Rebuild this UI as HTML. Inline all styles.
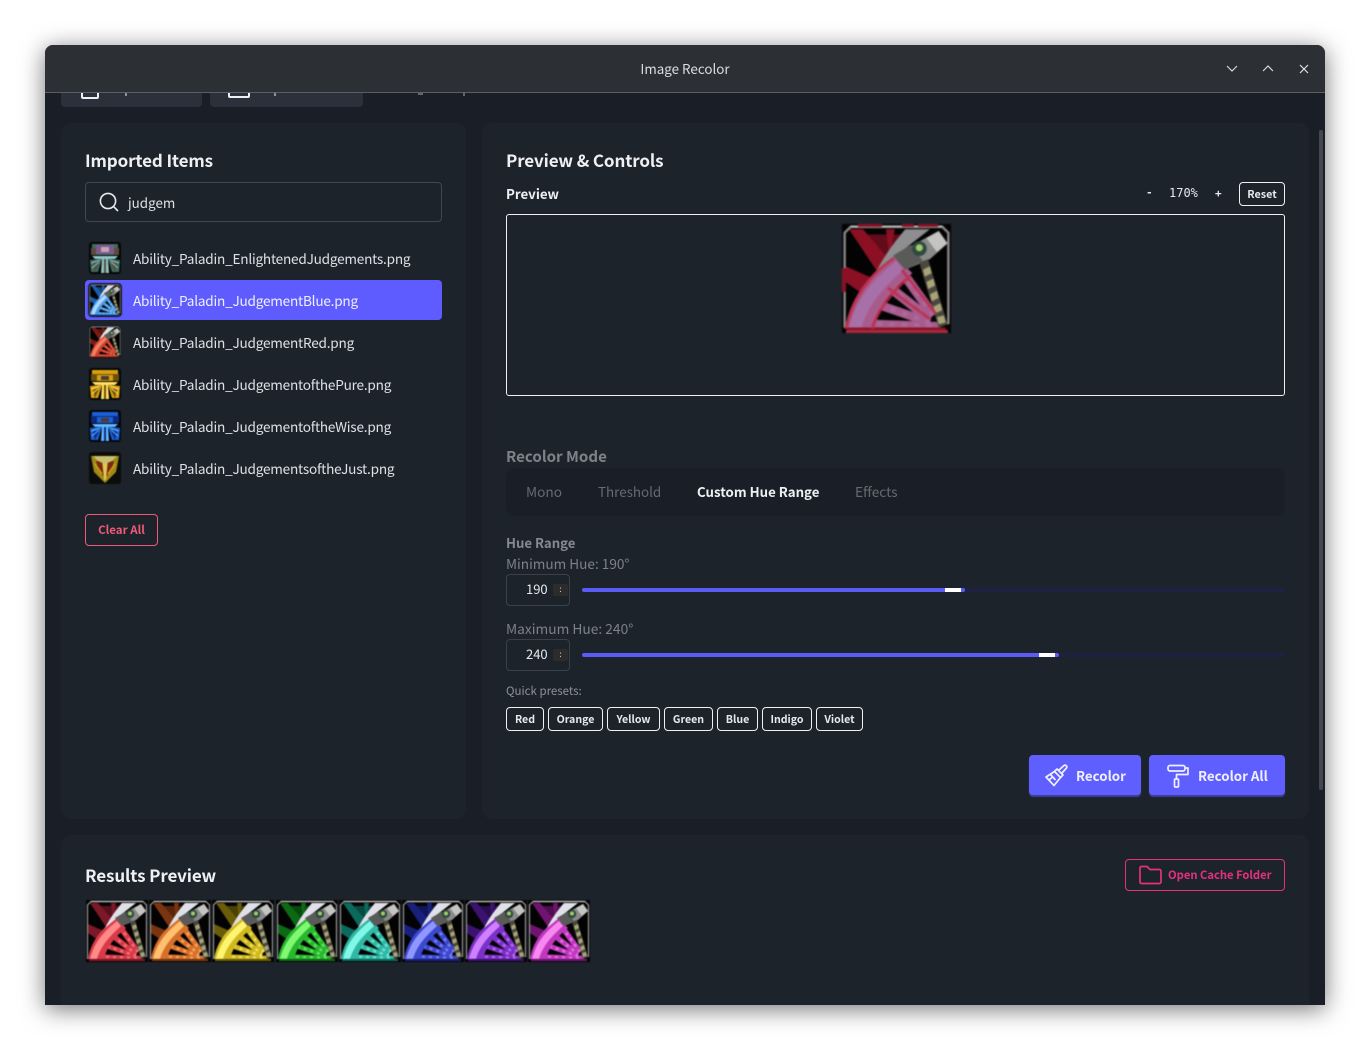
<!DOCTYPE html>
<html><head><meta charset="utf-8"><style>
html,body{margin:0;padding:0;width:1370px;height:1050px;background:#fff;overflow:hidden}
body{font-family:"Noto Sans CJK JP","Liberation Sans",sans-serif;color:#e6e9ee;position:relative}
.a{position:absolute;white-space:nowrap}
#win{position:absolute;left:45px;top:45px;width:1280px;height:960px;background:#1a1e26;border-radius:8px 8px 0 0;box-shadow:0 4px 24px rgba(0,0,0,.55);overflow:hidden}
#tb{position:absolute;left:0;top:0;width:1280px;height:47px;background:#2c2f33;border-bottom:1px solid #5c5e61;z-index:5}
.card{position:absolute;background:#1d232b;border-radius:10px}
.h{font-size:17px;font-weight:700;color:#eef0f3;line-height:24px;letter-spacing:-.12px}
.row{font-size:13.6px;color:#dde1e7;line-height:20px;letter-spacing:-.22px}
.p{position:absolute;top:707px;height:22px;border:1px solid #eef0f3;border-radius:4px;font-size:10.6px;font-weight:700;color:#e6e9ee;text-align:center;line-height:23px;box-sizing:content-box}
.dim{color:#7d8289}
.num{position:absolute;left:506px;width:62px;height:30px;border:1px solid #3b4149;border-radius:4px}
.spin{position:absolute;left:553px;width:15px;height:12px;background:#2c2c2c;border-radius:2px;color:#ddd;font-size:8px;line-height:11px;text-align:center}
.trk{position:absolute;left:582px;width:703px;height:4px;background:#1f2140;border-radius:2px}
.btn{position:absolute;top:755px;height:40px;background:#5f5fff;border-radius:4px;box-shadow:0 2px 1px #3f3f9e;font-size:13.3px;font-weight:700;color:#eef0ff;line-height:41px}
svg{display:block}
.ic{position:absolute}
.sm{filter:blur(.4px)}
</style></head><body>
<svg width="0" height="0" style="position:absolute"><defs>
<symbol id="ham" viewBox="0 0 62 62">
<rect x="0" y="0" width="62" height="62" fill="#030303"/>
<g fill="var(--d)">
<path d="M4 3L12 3L30 24L22 30Z"/><path d="M2 24L20 32L15 42L2 33Z"/>
<path d="M12 6H36L28 22L22 26L18 16Z" opacity=".7"/><path d="M25 3L27 20L30 3Z"/>
</g>
<g fill="none" stroke="var(--m)">
<path d="M34 27L52 52" stroke-width="5.500"/><path d="M27 36L50 54" stroke-width="5.500"/><path d="M21 46L50 56" stroke-width="5"/><path d="M13 56.500L56 58" stroke-width="4.500"/>
</g>
<g fill="none" stroke="var(--l)" stroke-dasharray="3 4" opacity=".7">
<path d="M34 27L52 52" stroke-width="2.500"/><path d="M27 36L50 54" stroke-width="2.500"/><path d="M21 46L50 56" stroke-width="2.500"/><path d="M13 56.500L56 58" stroke-width="2"/>
</g>
<path d="M2 59C5 42 14 30 30 18L40 28C30 36 21 46 18 59Z" fill="var(--m)"/>
<path d="M4 59C8 43 17 32 31 21L35 26C25 35 15 45 11 59Z" fill="var(--l)"/>
<path d="M36 3H50L32 17L19 28C24 18 30 10 36 3Z" fill="var(--w,#e0e0e8)"/>
<path d="M29 18L55 4L60 11L50 20L36 26Z" fill="#8a8a88"/>
<path d="M29 18L39 12L46 21L36 26Z" fill="#5a5a58"/>
<path d="M48 8L55 4L60 11L54 16Z" fill="#c4c4c2"/>
<circle cx="44" cy="14" r="4.200" fill="#2c4a40"/><circle cx="44" cy="13.500" r="2" fill="#a8c868"/>
<path d="M44 22L49 20L60 57L55 59Z" fill="#4a483e"/>
<g fill="#a8a478"><path d="M46 26L50 24L51 28L47 30ZM48 33L52 31L53 35L49 37ZM50 40L54 38L55 42L51 44ZM52 47L56 45L57 49L53 51ZM54 53L58 52L59 56L55 57Z"/></g>
<path d="M1.500 59V5L5 1.500H57L60.500 5V57" fill="none" stroke="#8e8e8e" stroke-width="1.300"/>
<path d="M5 1.500H57" stroke="#bdbdbd" stroke-width="1.300"/>
<path d="M3 60H59" stroke="var(--d)" stroke-width="2.200"/>
</symbol>
<symbol id="temple" viewBox="0 0 32 32">
<rect width="32" height="32" rx="2" fill="#07070a"/>
<path d="M3 2H29V6H3Z" fill="var(--m)"/>
<path d="M2 6H30V13H2Z" fill="var(--d)"/>
<path d="M8 7H24V13H8Z" fill="var(--m)"/><path d="M12 8H20V12H12Z" fill="#4a3c34"/>
<path d="M3 14H29L26 17H6Z" fill="var(--l)"/>
<path d="M1 18L13 17L9 30H2Z" fill="var(--m)"/><path d="M31 18L19 17L23 30H30Z" fill="var(--m)"/>
<path d="M13 17H19L20 31H12Z" fill="var(--l)"/><path d="M15 17H17V31H15Z" fill="var(--d)"/>
<path d="M4 22L11 19L6 30ZM28 22L21 19L26 30Z" fill="var(--d)"/>
<path d="M2 21L11 18M30 21L21 18M3 26L10 20M29 26L22 20" stroke="var(--l)" stroke-width="1" fill="none"/>
</symbol>
</defs></svg>

<div id="win">
<div id="tb">
<div class="a" style="left:0;width:1280px;top:13px;text-align:center;font-size:13.400px;line-height:20px;color:#dcdde0">Image Recolor</div>
<svg class="ic" style="left:1181px;top:19px" width="12" height="10"><path d="M1 2L6 7L11 2" fill="none" stroke="#d8d8da" stroke-width="1.200"/></svg>
<svg class="ic" style="left:1217px;top:19px" width="12" height="10"><path d="M1 7L6 2L11 7" fill="none" stroke="#d8d8da" stroke-width="1.200"/></svg>
<svg class="ic" style="left:1254px;top:19px" width="10" height="10"><path d="M1 1L9 9M9 1L1 9" fill="none" stroke="#e2e2e4" stroke-width="1.200"/></svg>
</div>
</div>

<!-- top hidden buttons -->
<div class="a" style="left:61px;top:70px;width:141px;height:37px;background:#2a313a;border-radius:4px"></div>
<div class="a" style="left:210px;top:70px;width:153px;height:37px;background:#2a313a;border-radius:4px"></div>
<div class="a" style="left:81px;top:87px;width:14px;height:8px;border:2px solid #eef0f3;border-radius:2px"></div>
<div class="a" style="left:228px;top:87px;width:18px;height:7px;border:2px solid #eef0f3;border-radius:2px"></div>
<div class="a" style="left:125px;top:93px;width:2px;height:3px;background:#8d939b"></div>
<div class="a" style="left:274px;top:93px;width:2px;height:3px;background:#8d939b"></div>
<div class="a" style="left:418px;top:93px;width:5px;height:2px;background:#666"></div>
<div class="a" style="left:463px;top:93px;width:2px;height:3px;background:#666"></div>

<!-- cards -->
<div class="card" style="left:61px;top:123px;width:405px;height:696px"></div>
<div class="card" style="left:482px;top:123px;width:827px;height:696px"></div>
<div class="card" style="left:61px;top:835px;width:1248px;height:170px;border-radius:10px 10px 0 0"></div>
<div class="a" style="left:1319px;top:130px;width:4px;height:660px;background:#44484e;border-radius:2px"></div>

<!-- left -->
<div class="a h" style="left:85px;top:148px">Imported Items</div>
<div class="a" style="left:85px;top:182px;width:355px;height:38px;border:1px solid #41474f;border-radius:4px"></div>
<svg class="ic" style="left:98px;top:191px" width="22" height="22"><circle cx="10" cy="10" r="7.600" fill="none" stroke="#e6e9ee" stroke-width="1.600"/><path d="M15.600 15.600L20 20" stroke="#e6e9ee" stroke-width="1.600"/></svg>
<div class="a" style="left:128px;top:192px;font-size:13.400px;line-height:20px;color:#dde1e7">judgem</div>

<div class="a" style="left:85px;top:280px;width:357px;height:40px;background:#5f5cff;border-radius:4px"></div>

<!-- list icons -->
<svg class="ic sm" style="left:89px;top:242px;border-radius:3px;--l:#8fc4c4;--m:#3f6a5e;--d:#5a4c3c" width="32" height="32"><use href="#temple"/><rect x="7" y="3" width="18" height="9" fill="#7a5c8c"/><rect x="12" y="5" width="8" height="5" fill="#c9a0b8"/></svg>
<svg class="ic sm" style="left:89px;top:284px;border-radius:3px;outline:1px solid #1a1a22;--l:#b0d8ff;--m:#4a9be8;--d:#1c5fb0" width="32" height="32"><use href="#ham"/></svg>
<svg class="ic sm" style="left:89px;top:326px;border-radius:3px;--l:#f08060;--m:#d04030;--d:#7a1c14" width="32" height="32"><use href="#ham"/></svg>
<svg class="ic sm" style="left:89px;top:368px;border-radius:3px;--l:#ffe060;--m:#d8a010;--d:#6e5008" width="32" height="32"><use href="#temple"/></svg>
<svg class="ic sm" style="left:89px;top:410px;border-radius:3px;--l:#60b8ff;--m:#1c5fd8;--d:#0c2a80" width="32" height="32"><use href="#temple"/></svg>
<svg class="ic sm" style="left:89px;top:452px;border-radius:3px" width="32" height="32" viewBox="0 0 32 32"><rect width="32" height="32" rx="2" fill="#0c0c0a"/><path d="M2 4H30L27 20L16 31L5 20Z" fill="#a08a18"/><path d="M7 9H25L23 18L16 26L9 18Z" fill="#7a2a10"/><path d="M13 7H19L17 28H15Z" fill="#e0c850"/><path d="M4 4H28L23 9L16 12L9 9Z" fill="#c8c070"/><path d="M6 12L13 22M26 12L19 22" stroke="#d8a820" stroke-width="1.500"/></svg>

<div class="a row" style="left:133px;top:248px">Ability_Paladin_EnlightenedJudgements.png</div>
<div class="a row" style="left:133px;top:290px;color:#eef0ff">Ability_Paladin_JudgementBlue.png</div>
<div class="a row" style="left:133px;top:332px">Ability_Paladin_JudgementRed.png</div>
<div class="a row" style="left:133px;top:374px">Ability_Paladin_JudgementofthePure.png</div>
<div class="a row" style="left:133px;top:416px">Ability_Paladin_JudgementoftheWise.png</div>
<div class="a row" style="left:133px;top:458px">Ability_Paladin_JudgementsoftheJust.png</div>

<div class="a" style="left:85px;top:514px;width:71px;height:30px;border:1px solid #ee5a77;border-radius:4px;text-align:center;font-size:11.500px;font-weight:700;color:#ee5a77;line-height:30px">Clear All</div>

<!-- right -->
<div class="a h" style="left:506px;top:148px">Preview &amp; Controls</div>
<div class="a" style="left:506px;top:184px;font-size:13.300px;font-weight:700;line-height:20px;color:#eef0f3">Preview</div>
<div class="a" style="left:1146px;top:183px;font-family:'DejaVu Sans Mono',monospace;font-size:11px;font-weight:700;line-height:20px;color:#e6e9ee">-</div>
<div class="a" style="left:1169px;top:183px;font-family:'DejaVu Sans Mono',monospace;font-size:12px;line-height:20px;color:#e6e9ee">170%</div>
<div class="a" style="left:1215px;top:184px;font-family:'DejaVu Sans Mono',monospace;font-size:11px;font-weight:700;line-height:20px;color:#e6e9ee">+</div>
<div class="a" style="left:1239px;top:182px;width:44px;height:22px;border:1px solid #eef0f3;border-radius:4px;text-align:center;font-size:10.800px;font-weight:700;line-height:22px;color:#e6e9ee">Reset</div>
<div class="a" style="left:506px;top:214px;width:777px;height:180px;border:1px solid #eef0f3;border-radius:3px"></div>
<svg class="ic" style="left:842px;top:224px;filter:blur(.7px);--l:#a870a8;--m:#a85c8c;--d:#8c1024;--w:#8e8e90" width="109" height="109"><use href="#ham"/>
<g fill="none" stroke="#c02a48" stroke-width="3" opacity=".8"><path d="M4 105C10 75 28 50 52 34"/><path d="M30 105C36 85 50 68 68 52"/><path d="M60 46L94 90M46 64L88 95"/></g>
<g fill="#8c1024"><rect x="16" y="0" width="24" height="3"/><rect x="60" y="0" width="12" height="3"/><rect x="76" y="0" width="20" height="3"/><rect x="0" y="44" width="4" height="24"/></g>
<path d="M4 106H106V109H4Z" fill="#a82a3c"/></svg>

<div class="a dim" style="left:506px;top:445px;font-size:15.100px;font-weight:700;line-height:22px">Recolor Mode</div>
<div class="a" style="left:506px;top:468px;width:779px;height:48px;background:#1a1f27;border-radius:8px"></div>
<div class="a" style="left:526px;top:481px;font-size:13.700px;line-height:20px;color:#666b72">Mono</div>
<div class="a" style="left:598px;top:481px;font-size:13.400px;line-height:20px;color:#666b72">Threshold</div>
<div class="a" style="left:697px;top:482px;font-size:13.250px;font-weight:700;line-height:20px;color:#eef0f3">Custom Hue Range</div>
<div class="a" style="left:855px;top:481px;font-size:13.700px;line-height:20px;color:#666b72">Effects</div>

<div class="a dim" style="left:506px;top:533px;font-size:13.200px;font-weight:700;line-height:20px;color:#858a91">Hue Range</div>
<div class="a dim" style="left:506px;top:553px;font-size:13.600px;line-height:20px">Minimum Hue: 190°</div>
<div class="num" style="top:574px"></div>
<div class="a" style="left:526px;top:579px;font-size:13px;line-height:20px;color:#e6e9ee">190</div>
<div class="spin" style="top:584px">:</div>
<div class="trk" style="top:588px"></div>
<div class="a" style="left:582px;top:588px;width:383px;height:4px;background:#5b5bf5;border-radius:2px"></div>
<div class="a" style="left:945px;top:588px;width:16px;height:4px;background:#fff"></div>

<div class="a dim" style="left:506px;top:618px;font-size:13.750px;line-height:20px">Maximum Hue: 240°</div>
<div class="num" style="top:639px"></div>
<div class="a" style="left:526px;top:644px;font-size:13px;line-height:20px;color:#e6e9ee">240</div>
<div class="spin" style="top:649px">:</div>
<div class="trk" style="top:653px"></div>
<div class="a" style="left:582px;top:653px;width:477px;height:4px;background:#5b5bf5;border-radius:2px"></div>
<div class="a" style="left:1039px;top:653px;width:16px;height:4px;background:#fff"></div>

<div class="a" style="left:506px;top:681px;font-size:11.500px;line-height:20px;color:#8d9298">Quick presets:</div>
<div class="p" style="left:506px;width:36px">Red</div>
<div class="p" style="left:548px;width:53px">Orange</div>
<div class="p" style="left:607px;width:51px">Yellow</div>
<div class="p" style="left:664px;width:47px">Green</div>
<div class="p" style="left:717px;width:39px">Blue</div>
<div class="p" style="left:762px;width:48px">Indigo</div>
<div class="p" style="left:816px;width:45px">Violet</div>

<div class="btn" style="left:1029px;width:112px"><span class="a" style="left:47px">Recolor</span>
<svg class="ic" style="left:15px;top:8px" width="24" height="24" viewBox="0 0 24 24" fill="none" stroke="#eef0ff" stroke-width="1.700" stroke-linejoin="round"><path d="M15 7L20 2.500A1.800 1.800 0 0 1 22.500 5L18 10"/><path d="M13 6L19 12L16.500 14.500L10.500 8.500Z"/><path d="M10.500 8.500L2 14L10 22.500L16.500 14.500"/><path d="M6.500 11.500L11.500 17M5 17L8 14.500"/></svg></div>
<div class="btn" style="left:1149px;width:136px"><span class="a" style="left:49px">Recolor All</span>
<svg class="ic" style="left:17px;top:9px" width="24" height="24" viewBox="0 0 24 24" fill="none" stroke="#eef0ff" stroke-width="1.700" stroke-linejoin="round"><rect x="2" y="1.500" width="17" height="5.500" rx="2"/><path d="M19 4H22V10.500H10.500V15"/><rect x="8.500" y="15" width="4" height="8" rx="1"/></svg></div>

<!-- bottom -->
<div class="a h" style="left:85px;top:863px">Results Preview</div>
<div class="a" style="left:1125px;top:859px;width:158px;height:30px;border:1px solid #e6307f;border-radius:4px;color:#e6307f;font-size:11.200px;font-weight:700;line-height:30px"><span class="a" style="left:42px">Open Cache Folder</span>
<svg class="ic" style="left:13px;top:5px" width="23" height="20" viewBox="0 0 23 20" fill="none" stroke="#e6307f" stroke-width="1.700" stroke-linejoin="round"><path d="M1 3A1.500 1.500 0 0 1 2.500 1.500H8L11 4.500H20.500A1.500 1.500 0 0 1 22 6V17A1.500 1.500 0 0 1 20.500 18.500H2.500A1.500 1.500 0 0 1 1 17Z"/></svg></div>

<svg class="ic sm" style="left:86px;top:900px;--l:#ff8a88;--m:#d83a48;--d:#7c1828" width="62" height="62"><use href="#ham"/></svg>
<svg class="ic sm" style="left:149px;top:900px;--l:#ffc070;--m:#d8702c;--d:#7a3410" width="62" height="62"><use href="#ham"/></svg>
<svg class="ic sm" style="left:212px;top:900px;--l:#fff470;--m:#d0b820;--d:#6a5c08" width="62" height="62"><use href="#ham"/></svg>
<svg class="ic sm" style="left:276px;top:900px;--l:#80f870;--m:#28b830;--d:#0c6a14" width="62" height="62"><use href="#ham"/></svg>
<svg class="ic sm" style="left:339px;top:900px;--l:#80f8e8;--m:#30b8a4;--d:#0c6a5c" width="62" height="62"><use href="#ham"/></svg>
<svg class="ic sm" style="left:402px;top:900px;--l:#9098ff;--m:#3c48d0;--d:#18207c" width="62" height="62"><use href="#ham"/></svg>
<svg class="ic sm" style="left:465px;top:900px;--l:#d080ff;--m:#7c30c8;--d:#3c1270" width="62" height="62"><use href="#ham"/></svg>
<svg class="ic sm" style="left:528px;top:900px;--l:#f888f0;--m:#c038c0;--d:#701470" width="62" height="62"><use href="#ham"/></svg>
</body></html>
